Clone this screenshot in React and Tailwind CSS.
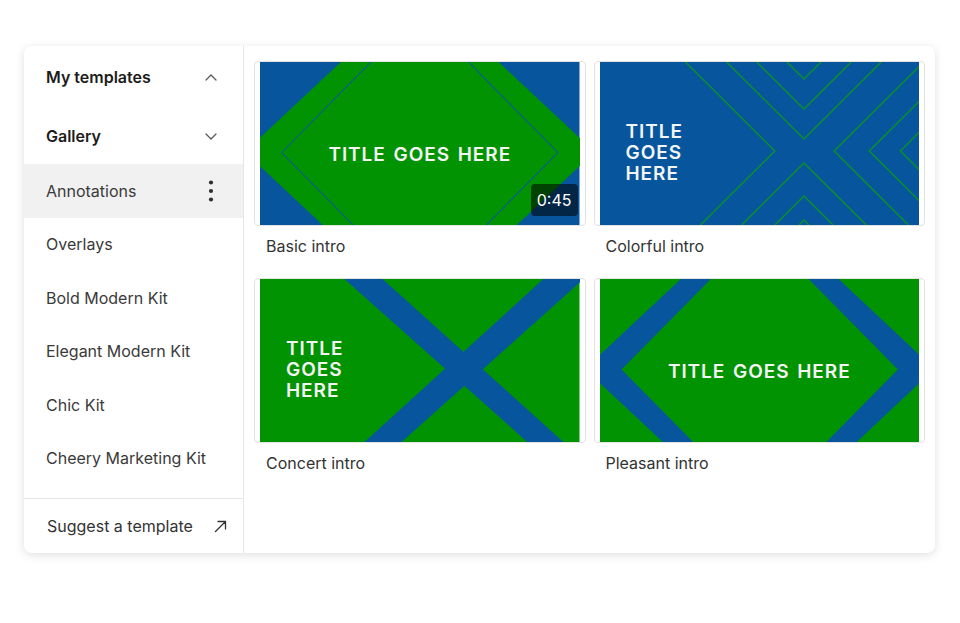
import React from "react";

const GREEN = "#029302";
const BLUE = "#07569d";

const kits = [
  "Annotations",
  "Overlays",
  "Bold Modern Kit",
  "Elegant Modern Kit",
  "Chic Kit",
  "Cheery Marketing Kit",
];

const Chevron = ({ up }) => (
  <svg width="12" height="7" viewBox="0 0 12 7" fill="none">
    <path
      d={up ? "M1 6L6 1L11 6" : "M1 1L6 6L11 1"}
      stroke="#595959"
      strokeWidth="1.3"
      strokeLinecap="round"
      strokeLinejoin="round"
    />
  </svg>
);

const Kebab = () => (
  <svg width="6" height="22" viewBox="0 0 6 22" fill="#2f2f2f">
    <circle cx="3" cy="2.5" r="2.1" />
    <circle cx="3" cy="11" r="2.1" />
    <circle cx="3" cy="19.5" r="2.1" />
  </svg>
);

const ArrowOut = () => (
  <svg width="13" height="13" viewBox="0 0 13 13" fill="none">
    <path
      d="M1.5 11.5L11.5 1.5M4 1.5H11.5V9"
      stroke="#333"
      strokeWidth="1.3"
      strokeLinecap="round"
      strokeLinejoin="round"
    />
  </svg>
);

// diamond polygon points around a centre with horizontal / vertical radii
const diamond = (cx, cy, a, b) =>
  `${cx - a},${cy} ${cx},${cy - b} ${cx + a},${cy} ${cx},${cy + b}`;

const BasicArt = () => (
  <svg className="w-full h-full" viewBox="0 0 318 163" preserveAspectRatio="none">
    <rect width="318" height="163" fill={BLUE} />
    <polygon points={diamond(159, 90, 174, 164)} fill={GREEN} />
    <polygon points={diamond(159, 90.5, 137.5, 140)} fill="none" stroke={BLUE} strokeWidth="1" />
  </svg>
);

const ColorfulArt = () => {
  const lines = [
    "85,0 174,89 100,163",
    "126,0 203,77 280,0",
    "156,0 203,47 250,0",
    "186,0 203,17 220,0",
    "141,163 203,101 265,163",
    "174,163 203,134 232,163",
    "198,163 203,158 208,163",
    "322,0 233,89 307,163",
    "318,39 268,89 318,139",
    "318,70 299,89 318,108",
  ];
  return (
    <svg className="w-full h-full" viewBox="0 0 318 163" preserveAspectRatio="none">
      <rect width="318" height="163" fill={BLUE} />
      {lines.map((p) => (
        <polyline key={p} points={p} fill="none" stroke="#0a8f2a" strokeWidth="1.5" />
      ))}
    </svg>
  );
};

const ConcertArt = () => (
  <svg className="w-full h-full" viewBox="0 0 318 163" preserveAspectRatio="none">
    <rect width="318" height="163" fill={GREEN} />
    <polygon points="84,0 122,0 302,163 266,163" fill={BLUE} />
    <polygon points="282,0 322,0 141,163 104,163" fill={BLUE} />
  </svg>
);

const PleasantArt = () => (
  <svg className="w-full h-full" viewBox="0 0 318 163" preserveAspectRatio="none">
    <rect width="318" height="163" fill={GREEN} />
    <polygon points={diamond(159, 90, 174, 164)} fill={BLUE} />
    <polygon points={diamond(159, 90.5, 137.5, 140)} fill={GREEN} />
  </svg>
);

const titleCls =
  "text-[19px] font-semibold tracking-[0.05em] text-[#f4f4f4] leading-[21px]";

const CenterTitle = () => (
  <div className="absolute inset-0 flex items-center justify-center pt-[22px]">
    <span className={`${titleCls} [word-spacing:2px]`}>TITLE GOES HERE</span>
  </div>
);

const StackTitle = () => (
  <div className="absolute inset-0 flex flex-col justify-center pl-[26px] pt-[18px]">
    <span className={titleCls}>TITLE</span>
    <span className={titleCls}>GOES</span>
    <span className={titleCls}>HERE</span>
  </div>
);

const Template = ({ name, art, title, duration }) => (
  <div>
    <div className="border border-[#e2e2e2] rounded-[4px] bg-white px-[5px]">
      <div className="relative h-[163px] overflow-hidden">
        {art}
        {title}
        {duration && (
          <div className="absolute right-[2px] bottom-[9px] h-[32px] px-[6px] flex items-center rounded-[4px] bg-black/55 text-white text-[16px]">
            {duration}
          </div>
        )}
      </div>
    </div>
    <div className="mt-[10px] pl-3 text-[16px] leading-5 text-[#333]">{name}</div>
  </div>
);

export default function App() {
  return (
    <div
      className="w-[960px] h-[623px] bg-white pt-[46px] pl-6"
      style={{ fontFamily: "Inter, 'Noto Sans', sans-serif" }}
    >
      <div className="flex w-[911px] h-[507px] bg-white rounded-lg shadow-[0_2px_10px_rgba(0,0,0,0.13)] overflow-hidden">
        {/* Sidebar */}
        <div className="w-[220px] flex flex-col border-r border-[#e6e6e6]">
          <div className="h-[61px] pt-[1px] flex items-center justify-between pl-[22px] pr-[26px]">
            <span className="text-[16px] font-semibold text-[#1c1c1c]">My templates</span>
            <Chevron up />
          </div>
          <div className="h-[57px] pt-[1px] flex items-center justify-between pl-[22px] pr-[26px]">
            <span className="text-[16px] font-semibold text-[#1c1c1c]">Gallery</span>
            <Chevron />
          </div>
          {kits.map((kit, i) => (
            <div
              key={kit}
              className={`h-[53.5px] flex items-center justify-between pl-[22px] pr-[29px] text-[16px] text-[#3a3a3a] ${
                i === 0 ? "bg-[#f1f1f1]" : ""
              }`}
            >
              <span>{kit}</span>
              {i === 0 && <Kebab />}
            </div>
          ))}
          <div className="mt-auto h-[55px] border-t border-[#e6e6e6] flex items-center justify-between pl-[23px] pr-[16px] text-[16px] text-[#333]">
            <span>Suggest a template</span>
            <ArrowOut />
          </div>
        </div>

        {/* Templates */}
        <div className="flex-1 pl-[10px] pr-[10px] pt-[15px]">
          <div className="grid grid-cols-2 gap-x-[8px] gap-y-[22px]">
            <Template name="Basic intro" art={<BasicArt />} title={<CenterTitle />} duration="0:45" />
            <Template name="Colorful intro" art={<ColorfulArt />} title={<StackTitle />} />
            <Template name="Concert intro" art={<ConcertArt />} title={<StackTitle />} />
            <Template name="Pleasant intro" art={<PleasantArt />} title={<CenterTitle />} />
          </div>
        </div>
      </div>
    </div>
  );
}
